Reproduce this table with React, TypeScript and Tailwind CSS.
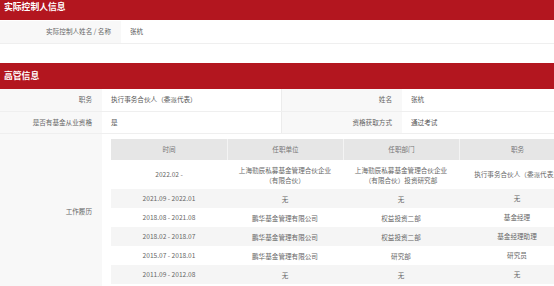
import React from 'react';

interface Job {
  time: string;
  company: string;
  dept: string;
  title: string;
}

const jobs: Job[] = [
  { time: '2022.02 -', company: '上海勤辰私募基金管理合伙企业（有限合伙）', dept: '上海勤辰私募基金管理合伙企业（有限合伙）投资研究部', title: '执行事务合伙人（委派代表）' },
  { time: '2021.09 - 2022.01', company: '无', dept: '无', title: '无' },
  { time: '2018.08 - 2021.08', company: '鹏华基金管理有限公司', dept: '权益投资二部', title: '基金经理' },
  { time: '2018.02 - 2018.07', company: '鹏华基金管理有限公司', dept: '权益投资二部', title: '基金经理助理' },
  { time: '2015.07 - 2018.01', company: '鹏华基金管理有限公司', dept: '研究部', title: '研究员' },
  { time: '2011.09 - 2012.08', company: '无', dept: '无', title: '无' },
];

const SectionHeader: React.FC<{ title: string; className?: string }> = ({ title, className = '' }) => (
  <div className={`h-[26px] bg-[#b3161f] flex items-center pl-[4px] text-white text-[8.8px] font-bold ${className}`}>
    {title}
  </div>
);

const Label: React.FC<{ w: string; children: React.ReactNode; border?: boolean }> = ({ w, children, border }) => (
  <div className={`${w} shrink-0 bg-[#f8f8f8] flex items-center justify-end pr-[10px] text-[#666] ${border ? 'border-l border-[#ececec]' : ''}`}>
    {children}
  </div>
);

const App: React.FC = () => {
  return (
    <div
      className="w-[554px] h-[286px] overflow-hidden bg-white text-[6.6px] text-[#555]"
      style={{ fontFamily: '"Noto Sans CJK SC", "Noto Sans", sans-serif' }}
    >
      <SectionHeader title="实际控制人信息" className="-mt-[6px]" />
      <div className="flex h-[23px] border-b border-[#efefef] mt-[1px]">
        <Label w="w-[121px]">实际控制人姓名 / 名称</Label>
        <div className="flex items-center pl-[9px]">张杭</div>
      </div>

      <div className="h-[19px]" />

      <SectionHeader title="高管信息" />
      <div className="flex h-[23px] border-b border-[#efefef]">
        <Label w="w-[102px]">职务</Label>
        <div className="w-[179px] shrink-0 flex items-center pl-[9px]">执行事务合伙人（委派代表）</div>
        <Label w="w-[121px]" border>姓名</Label>
        <div className="flex items-center pl-[9px]">张杭</div>
      </div>
      <div className="flex h-[22px] border-b border-[#efefef]">
        <Label w="w-[102px]">是否有基金从业资格</Label>
        <div className="w-[179px] shrink-0 flex items-center pl-[9px]">是</div>
        <Label w="w-[121px]" border>资格获取方式</Label>
        <div className="flex items-center pl-[9px]">通过考试</div>
      </div>
      <div className="flex">
        <Label w="w-[102px]">工作履历</Label>
        <div className="pl-[9px] pt-[5px] pb-[5px]">
          <div className="w-[464px] text-center text-[#666]">
            <div className="grid grid-cols-4 h-[21px] bg-[#e6e6e6] text-[#777]">
              {['时间', '任职单位', '任职部门', '职务'].map((h, i) => (
                <div key={h} className={`flex items-center justify-center ${i > 0 ? 'border-l border-[#f4f4f4]' : ''}`}>
                  {h}
                </div>
              ))}
            </div>
            {jobs.map((j, idx) => (
              <div
                key={j.time}
                className={`grid grid-cols-4 ${idx === 0 ? 'h-[29px]' : 'h-[19px]'} ${idx % 2 === 1 ? 'bg-[#f5f5f5]' : 'bg-white'}`}
              >
                <div className="flex items-center justify-center px-[10px]">{j.time}</div>
                <div className="flex items-center justify-center px-[10px] leading-[10px]">{j.company}</div>
                <div className="flex items-center justify-center px-[10px] leading-[10px]">{j.dept}</div>
                <div className="flex items-center justify-center whitespace-nowrap">{j.title}</div>
              </div>
            ))}
          </div>
        </div>
      </div>
    </div>
  );
};

export default App;
